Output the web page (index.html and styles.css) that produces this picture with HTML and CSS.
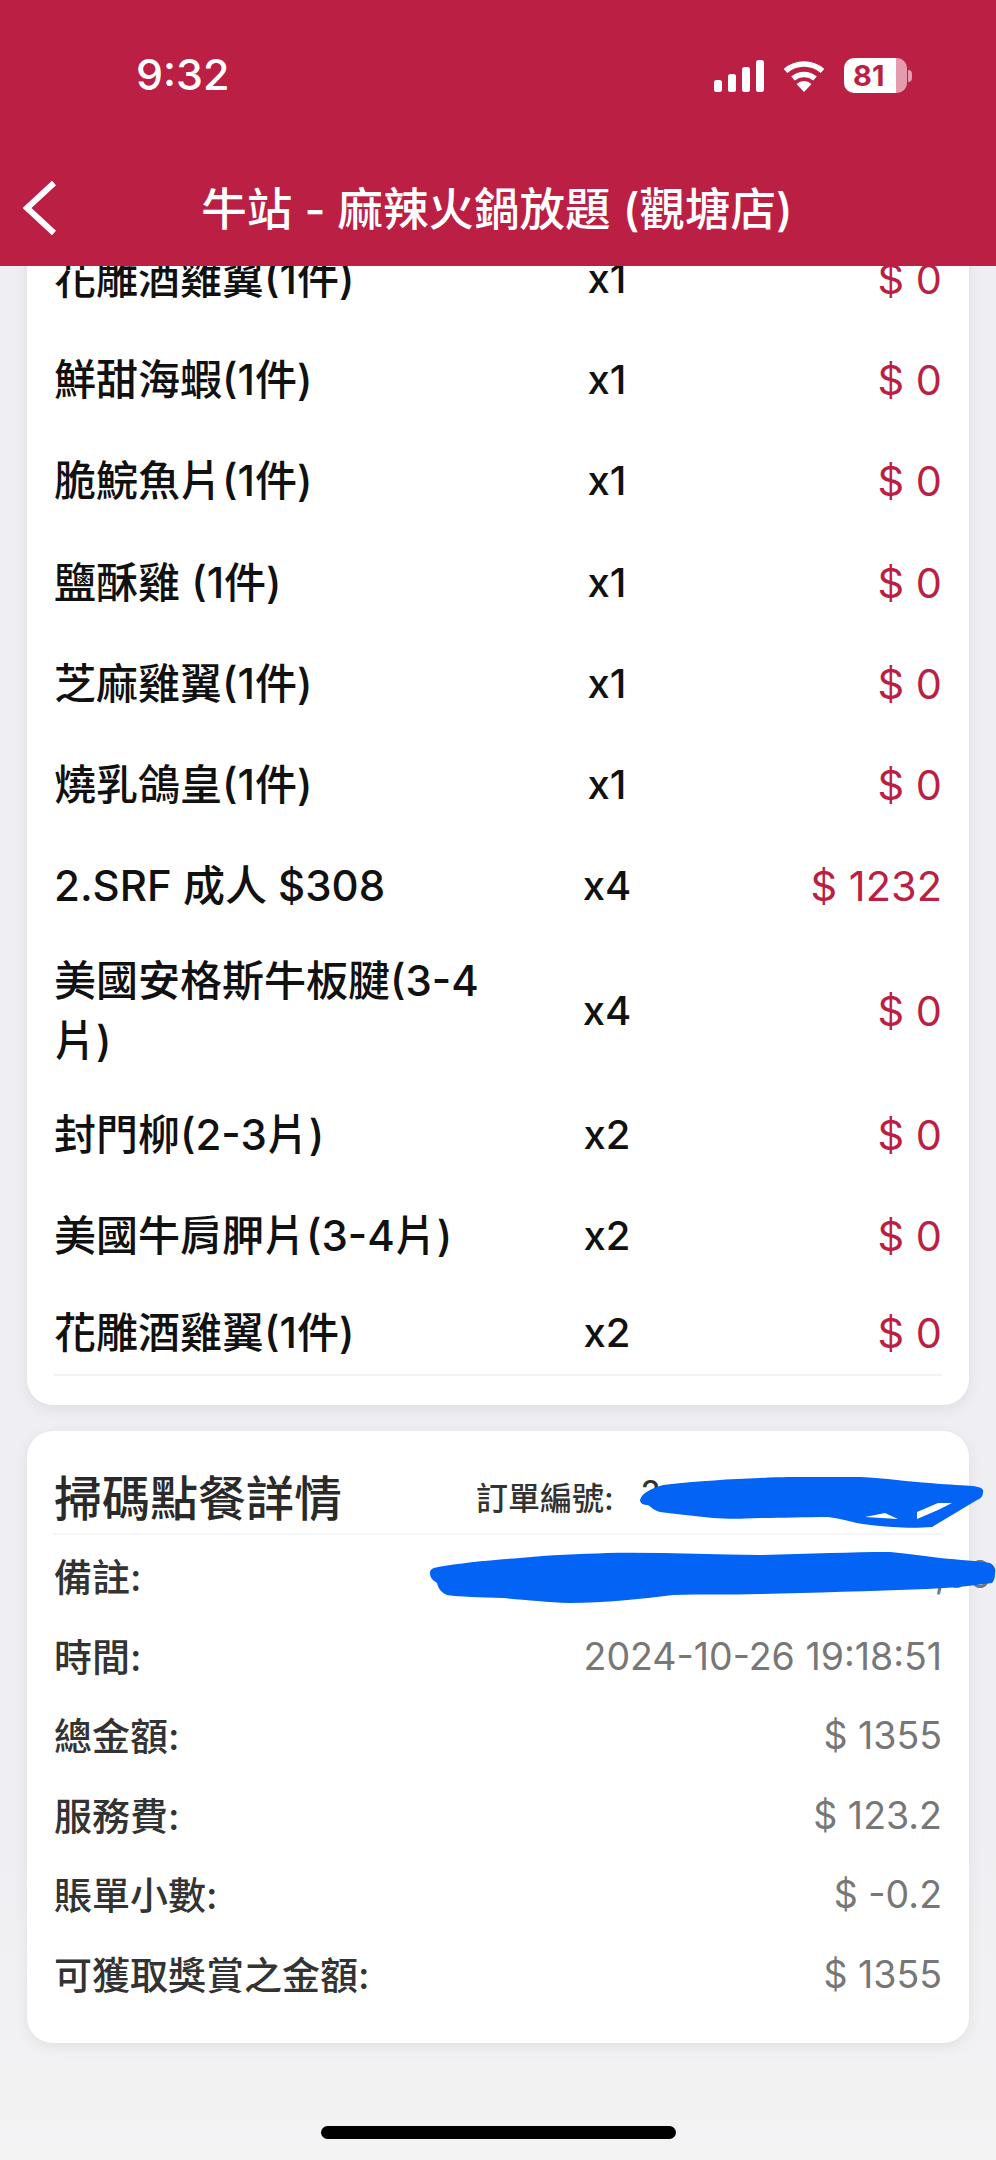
FILE: index.html
```html
<!DOCTYPE html>
<html>
<head>
    <title>訂單詳情</title>
    <link rel="stylesheet" href="styles.css">
</head>
<body>
    <div class="phone">
        <header class="topbar">
            <div class="status">
                <span class="clock">9:32</span>
                <div class="status-icons">
                    <svg class="signal" width="50" height="32" viewBox="0 0 50 32">
                        <rect x="0" y="20" width="8" height="12" rx="2.5"/>
                        <rect x="14" y="14" width="8" height="18" rx="2.5"/>
                        <rect x="28" y="7" width="8" height="25" rx="2.5"/>
                        <rect x="42" y="0" width="8" height="32" rx="2.5"/>
                    </svg>
                    <svg class="wifi" width="42" height="32" viewBox="0 0 42 32">
                        <path d="M2.5 11 A28 28 0 0 1 39.5 11" fill="none" stroke="#fff" stroke-width="5.5"/>
                        <path d="M10 18.5 A17 17 0 0 1 32 18.5" fill="none" stroke="#fff" stroke-width="5.5"/>
                        <path d="M13.5 24 A11 11 0 0 1 28.5 24 L21 32 Z" fill="#fff"/>
                    </svg>
                    <div class="battery">
                        <div class="battery-level">81</div>
                        <div class="battery-nub"></div>
                    </div>
                </div>
            </div>
            <div class="navbar">
                <svg class="back" width="36" height="56" viewBox="0 0 36 56">
                    <path d="M32 3 L5 28 L32 53" fill="none" stroke="#fff" stroke-width="6"/>
                </svg>
                <h1>牛站 - 麻辣火鍋放題 (觀塘店)</h1>
            </div>
        </header>

        <main class="content">
            <section class="card items">
                <div class="item"><span class="name">花雕酒雞翼(1件)</span><span class="qty">x1</span><span class="price">$ 0</span></div>
                <div class="item"><span class="name">鮮甜海蝦(1件)</span><span class="qty">x1</span><span class="price">$ 0</span></div>
                <div class="item"><span class="name">脆鯇魚片(1件)</span><span class="qty">x1</span><span class="price">$ 0</span></div>
                <div class="item"><span class="name">鹽酥雞 (1件)</span><span class="qty">x1</span><span class="price">$ 0</span></div>
                <div class="item"><span class="name">芝麻雞翼(1件)</span><span class="qty">x1</span><span class="price">$ 0</span></div>
                <div class="item"><span class="name">燒乳鴿皇(1件)</span><span class="qty">x1</span><span class="price">$ 0</span></div>
                <div class="item"><span class="name">2.SRF 成人 $308</span><span class="qty">x4</span><span class="price">$ 1232</span></div>
                <div class="item tall"><span class="name">美國安格斯牛板腱(3-4片)</span><span class="qty">x4</span><span class="price">$ 0</span></div>
                <div class="item"><span class="name">封門柳(2-3片)</span><span class="qty">x2</span><span class="price">$ 0</span></div>
                <div class="item"><span class="name">美國牛肩胛片(3-4片)</span><span class="qty">x2</span><span class="price">$ 0</span></div>
                <div class="item last"><span class="name">花雕酒雞翼(1件)</span><span class="qty">x2</span><span class="price">$ 0</span></div>
            </section>

            <section class="card details">
                <div class="details-head">
                    <h2>掃碼點餐詳情</h2>
                    <div class="order-no"><span>訂單編號:</span><span class="order-value">2</span></div>
                </div>
                <div class="row"><span class="label">備註:</span><span class="value note"><span class="note-slash">/</span>,00</span></div>
                <div class="row"><span class="label">時間:</span><span class="value">2024-10-26 19:18:51</span></div>
                <div class="row"><span class="label">總金額:</span><span class="value">$ 1355</span></div>
                <div class="row"><span class="label">服務費:</span><span class="value">$ 123.2</span></div>
                <div class="row"><span class="label">賬單小數:</span><span class="value">$ -0.2</span></div>
                <div class="row"><span class="label">可獲取獎賞之金額:</span><span class="value">$ 1355</span></div>
            </section>
        </main>

        <!-- blue pen marks drawn over the screenshot -->
        <svg class="scribble scribble-order" width="344" height="52" viewBox="0 0 344 52">
            <path d="M0 23 C2 16 10 12 23 8 C60 4 90 2 120 1 C160 -1 190 0 220 0 C245 1 270 5 290 6 C310 8 325 8 333 9 C342 10 344 13 343 15 C343 20 340 22 337 23 L292 50 C280 51 265 51 253 50 C240 49 228 48 217 46 C205 43 196 41 188 40 C165 40 140 41 120 41 C100 42 88 42 73 41 C55 39 35 37 20 35 C14 33 12 31 8 28 C3 28 0 26 0 23 Z" fill="#0263f4"/>
            <path d="M225 40 L245 36 L258 42 Z M277 35 L298 26 L312 26 L298 33 L277 42 Z" fill="#fff"/>
        </svg>
        <svg class="scribble scribble-note" width="566" height="52" viewBox="0 0 566 52">
            <path d="M0 21 C0 17 3 16 8 15 C30 11 60 8 90 6 C120 3 150 2 177 1 C230 0 280 3 330 3 C380 2 420 0 460 0 C480 2 495 4 510 6 C530 8 548 9 560 11 C565 14 566 18 565 21 C565 26 564 29 562 31 C540 34 520 36 497 37 C440 39 380 41 330 42 C300 43 270 42 243 43 C210 47 175 51 140 51 C115 50 95 48 73 46 C50 45 30 45 17 43 C10 40 8 35 7 31 C2 28 0 25 0 21 Z" fill="#0263f4"/>
        </svg>
        <div class="home-bar"></div>
    </div>
</body>
</html>
```

FILE: styles.css
```css
* { box-sizing: border-box; }
html, body { margin: 0; padding: 0; }
body { font-family: Inter, "Noto Sans CJK TC", sans-serif; background: #f2f2f5; color: #111; }
h1, h2 { margin: 0; }

.phone { position: relative; width: 996px; height: 2160px; display: flex; flex-direction: column; overflow: hidden; background: linear-gradient(#efeff3 85%, #f3f3f4 100%); }

.topbar { height: 266px; flex: none; background: #bb1f44; color: #fff; position: relative; z-index: 2; }
.status { height: 148px; padding: 50px 83px 0 136px; display: flex; justify-content: space-between; align-items: flex-start; }
.clock { font-size: 43px; font-weight: 500; line-height: 48px; }
.status-icons { display: flex; align-items: center; gap: 19px; padding-top: 8px; }
.signal rect { fill: #fff; }
.battery { display: flex; align-items: center; width: 69px; }
.battery-level { width: 63px; height: 35px; border-radius: 10px; background: linear-gradient(90deg, #fff 83%, #e59aae 83%); color: #bb1f44; font-size: 29px; font-weight: 700; line-height: 35px; padding-left: 9px; }
.battery-nub { width: 4px; height: 12px; margin-left: 1px; border-radius: 0 6px 6px 0; background: #e59aae; }

.navbar { height: 118px; display: flex; align-items: flex-start; padding: 32px 0 0 22px; position: relative; }
.back { flex: none; }
.navbar h1 { flex: 1; margin: 2px 0 0 0; padding-right: 60px; text-align: center; font-size: 45.5px; font-weight: 500; line-height: 56px; white-space: nowrap; }

.content { flex: 1; min-height: 0; overflow: hidden; padding: 0 27px; }
.card { background: #fff; border-radius: 26px; box-shadow: 0 4px 14px rgba(0,0,0,0.07); }

.items { margin-top: -38px; padding: 0 27px 0 27px; height: 1177px; }
.item { display: flex; align-items: center; height: 101.3px; font-size: 42px; font-weight: 500; line-height: 60px; }
.item.tall { height: 147px; }
.item.last { border-bottom: 2px solid #f3f3f5; height: 89px; padding-top: 6px; }
.name { width: 440px; flex: none; }
.qty { width: 220px; flex: none; text-align: center; font-size: 40px; font-weight: 500; color: #111; margin-left: 3px; }
.price { flex: 1; text-align: right; color: #bb1f44; font-weight: 400; font-size: 41.5px; }

.details { margin-top: 26px; padding: 0 27px 0 27px; height: 612px; }
.details-head { height: 104px; padding-top: 26px; display: flex; align-items: center; border-bottom: 2px solid #f5f5f7; }
.details-head h2 { font-size: 48px; font-weight: 500; color: #2a2a2a; width: 422px; }
.order-no { display: flex; font-size: 32px; font-weight: 500; color: #333; gap: 27px; padding-top: 2px; }
.row { display: flex; justify-content: space-between; align-items: center; height: 79.5px; font-size: 38px; }
.label { font-weight: 500; color: #333; }
.value { color: #777; font-size: 37.5px; padding-top: 4px; }
.note { margin-right: -50px; padding-top: 0; }
.note-slash { margin-right: 150px; }

.scribble { position: absolute; }
.scribble-order { left: 640px; top: 1477px; }
.scribble-note { left: 430px; top: 1552px; }
.home-bar { position: absolute; left: 321px; top: 2126px; width: 355px; height: 13px; border-radius: 7px; background: #000; }
```
